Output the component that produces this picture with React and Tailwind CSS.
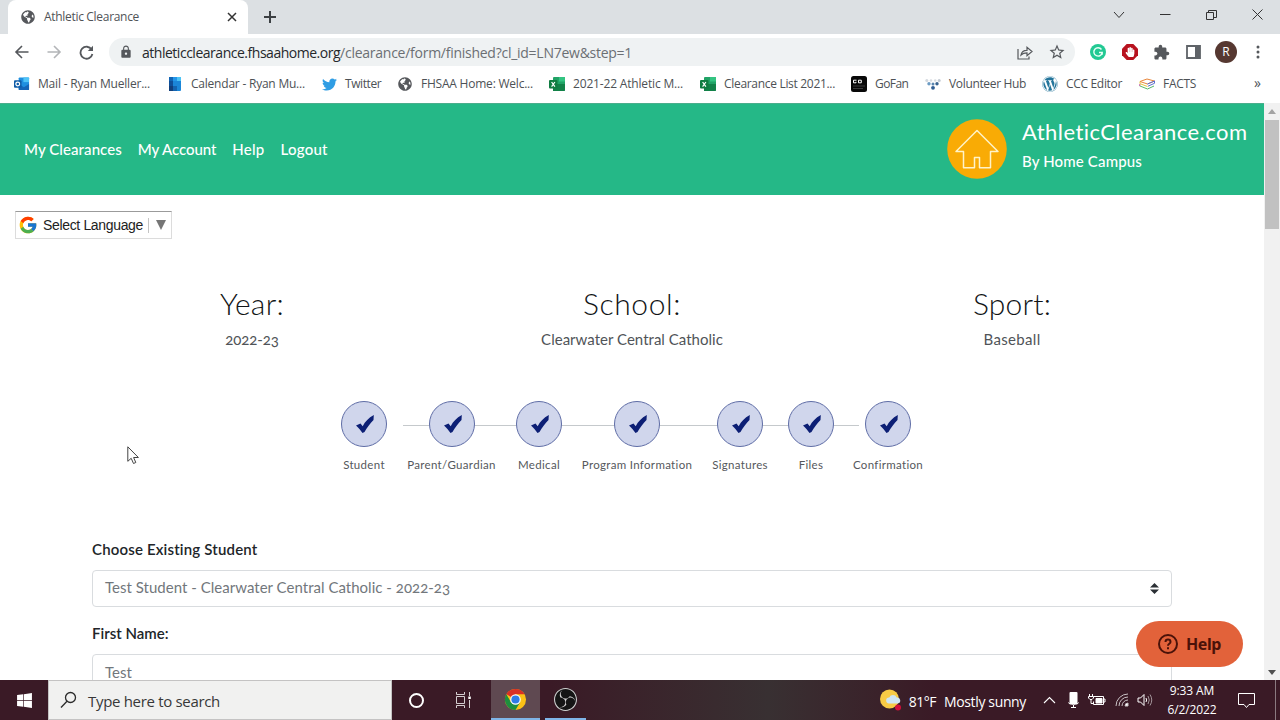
import { FaTwitter, FaWordpress, FaWindows, FaGlobeAmericas, FaHandPaper } from "react-icons/fa";
import { MdExtension, MdLock, MdStarBorder } from "react-icons/md";
import { FcGoogle } from "react-icons/fc";
import { SiObsstudio } from "react-icons/si";

const bookmarks = [
  { label: "Mail - Ryan Mueller...", icon: <OutlookIcon />, width: "w-[153px]", gap: "gap-[8px]", text: "tracking-[-0.19px]" },
  { label: "Calendar - Ryan Mu...", icon: <CalendarIcon />, width: "w-[154px]", gap: "gap-[8px]", text: "tracking-[-0.22px]" },
  { label: "Twitter", icon: <FaTwitter size={15} color="#2f9de4" />, width: "w-[76px]", gap: "gap-[8px]", text: "tracking-[-0.4px]" },
  { label: "FHSAA Home: Welc...", icon: <FaGlobeAmericas size={14} color="#56585c" />, width: "w-[152px]", gap: "gap-[8px]", text: "tracking-[-0.22px]" },
  { label: "2021-22 Athletic M...", icon: <ExcelIcon />, width: "w-[151px]", gap: "gap-[8px]", text: "tracking-[-0.17px]" },
  { label: "Clearance List 2021...", icon: <ExcelIcon />, width: "w-[151px]", gap: "gap-[8px]", text: "tracking-[-0.31px]" },
  { label: "GoFan", icon: <GoFanIcon />, width: "w-[74px]", gap: "gap-[8px]", text: "tracking-[-0.55px]" },
  { label: "Volunteer Hub", icon: <VolunteerIcon />, width: "w-[117px]", gap: "gap-[8px]", text: "tracking-[-0.34px]" },
  { label: "CCC Editor", icon: <FaWordpress size={16} color="#24759b" />, width: "w-[97px]", gap: "gap-[8px]", text: "tracking-[-0.32px]" },
  { label: "FACTS", icon: <FactsIcon />, width: "w-[90px]", gap: "gap-[8px]", text: "tracking-[-0.31px]" },
];

const navLinks = [
  { label: "My Clearances", text: "tracking-[0.08px]" },
  { label: "My Account", text: "tracking-[-0.08px]" },
  { label: "Help", text: "tracking-[0.25px]" },
  { label: "Logout", text: "tracking-[0.25px]" },
];

const summary = [
  { title: "Year:", value: "2022-23", titleText: "tracking-[0.3px]", valueText: "tracking-[-0.1px]" },
  { title: "School:", value: "Clearwater Central Catholic", titleText: "tracking-[0.6px]", valueText: "tracking-[0.02px]" },
  { title: "Sport:", value: "Baseball", titleText: "tracking-[0.2px]", valueText: "tracking-[0.33px]" },
];

const steps = [
  { label: "Student", width: "w-[62px]" },
  { label: "Parent/Guardian", width: "w-[113px]" },
  { label: "Medical", width: "w-[62px]" },
  { label: "Program Information", width: "w-[134px]" },
  { label: "Signatures", width: "w-[72px]" },
  { label: "Files", width: "w-[70px]" },
  { label: "Confirmation", width: "w-[84px]" },
];

function OutlookIcon() {
  return (
    <svg width="17" height="14" viewBox="0 0 17 14">
      <rect x="5" y="0" width="11" height="13" rx="1" fill="#1f8fe0" />
      <rect x="10" y="0" width="6" height="5" fill="#4fc3f7" />
      <path d="M5 7l5.5 3.5L16 7v6.5H5z" fill="#1565b8" />
      <rect x="0" y="3" width="8" height="8" rx="1" fill="#0f5ca8" />
      <circle cx="4" cy="7" r="2" fill="none" stroke="#fff" strokeWidth="1.3" />
    </svg>
  );
}

function CalendarIcon() {
  return (
    <svg width="14" height="14" viewBox="0 0 14 14">
      <rect x="1" width="12" height="14" rx="1" fill="#1b86d8" />
      <rect x="1" width="4" height="4" fill="#1265b5" />
      <rect x="5" width="4" height="4" fill="#2596e8" />
      <rect x="9" width="4" height="4" fill="#4cc3f5" />
      <rect x="1" y="4" width="4" height="5" fill="#0f4f98" />
      <rect x="1" y="9" width="4" height="5" fill="#123f7b" />
      <rect x="5" y="9" width="4" height="5" fill="#1464b0" />
    </svg>
  );
}

function ExcelIcon() {
  return (
    <svg width="16" height="14" viewBox="0 0 16 14">
      <rect x="4" width="12" height="14" rx="1" fill="#21a366" />
      <rect x="10" width="6" height="4.5" fill="#33c481" />
      <path d="M4 7h12v6a1 1 0 0 1-1 1H4z" fill="#128148" />
      <rect y="3" width="8.5" height="8.5" rx="1" fill="#107c41" />
      <path d="M2.6 5l3.3 4.6M5.9 5L2.6 9.6" stroke="#fff" strokeWidth="1.2" />
    </svg>
  );
}

function GoFanIcon() {
  return (
    <svg width="16" height="16" viewBox="0 0 16 16">
      <rect width="16" height="16" rx="2.5" fill="#080808" />
      <path d="M5.500 4.200H2.500v2.600H5V5.800M7.500 4.200h2.800v2.600H7.500z" fill="none" stroke="#fff" />
      <path d="M2 10h12M2 12.500h10" stroke="#3a3a3a" strokeWidth="1.2" />
    </svg>
  );
}

function VolunteerIcon() {
  return (
    <svg width="16" height="12" viewBox="0 0 16 12">
      <circle cx="1.800" cy="2.500" r="1.500" fill="#d3d8de" />
      <circle cx="6" cy="2.500" r="1.300" fill="#d9dde2" />
      <circle cx="10.200" cy="2.500" r="1.300" fill="#d9dde2" />
      <circle cx="14.200" cy="2.500" r="1.500" fill="#c3cad3" />
      <circle cx="4" cy="5.800" r="1.700" fill="#6d9cc4" />
      <circle cx="8" cy="6" r="1.500" fill="#5b86b0" />
      <circle cx="12" cy="5.800" r="1.700" fill="#3a638f" />
      <circle cx="8" cy="9.800" r="1.900" fill="#2f5d92" />
    </svg>
  );
}

function FactsIcon() {
  return (
    <svg width="16" height="12" viewBox="0 0 16 12" fill="none" strokeWidth="1">
      <path d="M1 3.500L8 1l7.500 2L8.500 6z" stroke="#e8853a" />
      <path d="M8.500 6l7-3v2.300L9 8.200" stroke="#5a6ed0" />
      <path d="M1 3.500v2.200L8.500 8.500" stroke="#e3c63c" />
      <path d="M.5 7.800L8.500 11 15 8" stroke="#56b868" />
      <path d="M.8 6v2" stroke="#c455a8" />
    </svg>
  );
}

function ChromeIcon() {
  return (
    <svg width="23" height="23" viewBox="0 0 24 24">
      <circle cx="12" cy="12" r="11" fill="#fbc116" />
      <path d="M12 12L2.470 6.500A11 11 0 0 1 21.530 6.500H12z" fill="#d93025" />
      <path d="M2.470 6.500A11 11 0 0 0 12 23l4.760-8.250L12 12 7.240 14.750z" fill="#1e8e3e" />
      <circle cx="12" cy="12" r="5.500" fill="#fff" />
      <circle cx="12" cy="12" r="4.300" fill="#2f7be6" />
    </svg>
  );
}

function TabStrip() {
  return (
    <div className="flex h-[34px] items-stretch bg-[#dce0e3] pl-2 text-[#3c4043]">
      <div className="flex w-[240px] items-center rounded-t-lg bg-white pl-[13px] pr-[11px]">
        <FaGlobeAmericas size={14} color="#56585c" />
        <span className="ml-[9px] flex-1 text-[12px] tracking-[-0.31px] text-[#505357]">Athletic Clearance</span>
        <svg width="10" height="10" viewBox="0 0 10 10" stroke="#333" strokeWidth="1.500"><path d="M1 1l8 8M9 1L1 9" /></svg>
      </div>
      <svg className="ml-[16px] mt-[11px]" width="12" height="12" viewBox="0 0 12 12" stroke="#3c4043" strokeWidth="2"><path d="M6 0v12M0 6h12" /></svg>
      <div className="ml-auto flex gap-[35px] pr-[17px] pt-[9px]">
        <svg width="12" height="12" viewBox="0 0 12 12" fill="none" stroke="#333"><path d="M1 3l5 5.500L11 3" /></svg>
        <svg width="11" height="12" viewBox="0 0 11 12" stroke="#333"><path d="M0 5.500h10.500" /></svg>
        <svg width="11" height="12" viewBox="0 0 11 12" fill="none" stroke="#333"><path d="M.5 3.500h7v7h-7zM2.500 3.500v-2h8v7h-3" /></svg>
        <svg width="11" height="12" viewBox="0 0 11 12" stroke="#333"><path d="M.5 .5l10 10M10.500 .5l-10 10" /></svg>
      </div>
    </div>
  );
}

function Toolbar() {
  return (
    <div className="flex h-[36px] items-center bg-white pl-[14px] text-[#55585c]">
      <svg width="16" height="16" viewBox="0 0 16 16" fill="none" stroke="currentColor" strokeWidth="1.600"><path d="M14.500 8H2.500M8 2L2 8l6 6" /></svg>
      <svg className="ml-[16px]" width="16" height="16" viewBox="0 0 16 16" fill="none" stroke="#b3b5b8" strokeWidth="1.600"><path d="M1.500 8h12M8 2l6 6-6 6" /></svg>
      <svg className="ml-[17px]" width="15" height="15" viewBox="0 0 15 15" fill="none" stroke="currentColor" strokeWidth="1.800">
        <path d="M12.600 4.500A6 6 0 1 0 13.400 9" />
        <path d="M14 .8V6H8.800z" fill="currentColor" stroke="none" />
      </svg>
      <div className="ml-[15px] flex h-[28px] w-[966px] items-center rounded-full bg-[#eff2f3] pl-[10px] pr-[9px]">
        <MdLock size={14} />
        <span className="ml-[9px] text-[14px] tracking-[-0.48px] text-[#25282b]">athleticclearance.fhsaahome.org</span>
        <span className="text-[14px] tracking-[-0.26px] text-[#6b6f73]">/clearance/form/finished?cl_id=LN7ew&amp;step=1</span>
        <svg className="ml-auto" width="16" height="15" viewBox="0 0 16 15" fill="none" stroke="currentColor" strokeWidth="1.200">
          <path d="M1 4v10h11v-2.500" />
          <path d="M4 10c.5-3 2.500-4.700 6-4.700V2.200L15 6.500l-5 4.200V7.900C7 7.900 5.500 8.500 4 10z" />
        </svg>
        <MdStarBorder className="ml-[15px]" size={18} />
      </div>
      <div className="ml-[15px] flex items-center">
        <svg width="16" height="16" viewBox="0 0 16 16" fill="none">
          <circle cx="8" cy="8" r="8" fill="#22c993" />
          <path d="M11.500 5.500A4.200 4.200 0 1 0 12.200 8.500H9M12.200 8.500v2.200" stroke="#e8fff6" strokeWidth="1.400" />
        </svg>
        <span className="relative ml-[16px] flex size-[16px] items-center justify-center">
          <svg className="absolute" width="16" height="16" viewBox="0 0 16 16"><path d="M4.700 0h6.600L16 4.700v6.600L11.300 16H4.700L0 11.300V4.700z" fill="#b8121f" /></svg>
          <FaHandPaper className="relative" size={10} color="#fff" />
        </span>
        <MdExtension className="ml-[15px]" size={17} />
        <svg className="ml-[16px]" width="15" height="14" viewBox="0 0 15 14"><path d="M1 1h13v12H1z" fill="none" stroke="#5f6368" strokeWidth="1.800" /><path d="M9 1h5v12H9z" fill="#5f6368" /></svg>
        <span className="ml-[14px] flex size-[22px] items-center justify-center rounded-full bg-[#563831] text-[12px] text-white">R</span>
        <svg className="ml-[19px]" width="4" height="14" viewBox="0 0 4 14" fill="#55585c"><circle cx="2" cy="2" r="1.500" /><circle cx="2" cy="7" r="1.500" /><circle cx="2" cy="12" r="1.500" /></svg>
      </div>
    </div>
  );
}

function BookmarksBar() {
  return (
    <div className="flex h-[33px] items-center bg-white pb-[5px] pl-[14px] text-[12px] text-[#4d5155]">
      {bookmarks.map((b) => (
        <div key={b.label} className={`flex shrink-0 items-center whitespace-nowrap ${b.width} ${b.gap}`}>
          <span className="flex w-[16px] justify-center">{b.icon}</span>
          <span className={b.text}>{b.label}</span>
        </div>
      ))}
      <span className="ml-auto pb-[3px] pr-[19px] text-[14px]">»</span>
    </div>
  );
}

function SiteHeader() {
  return (
    <header className="flex h-[92px] items-center justify-between border-t border-[#4aae8c] bg-[#25b887] pl-6 pr-[16px] text-white">
      <nav className="flex gap-4 pb-px text-[15px] font-medium">
        {navLinks.map((n) => (
          <a key={n.label} className={n.text}>{n.label}</a>
        ))}
      </nav>
      <div className="flex items-center pb-px">
        <svg width="60" height="60" viewBox="0 0 60 60">
          <circle cx="30" cy="30" r="29.800" fill="#f9ab05" />
          <path d="M30 11.500L9 32.500h7.500v16.300h11V38.500h5v10.300h11V32.500H51z" fill="none" stroke="#fff3c9" strokeWidth="1.500" strokeLinejoin="round" />
        </svg>
        <div className="ml-[15px] h-[60px] w-[226px] whitespace-nowrap">
          <div className="mt-[-1px] text-[22px] leading-[28px] tracking-[0.45px]">AthleticClearance.com</div>
          <div className="mt-[5px] text-[15px] font-medium leading-[20px] tracking-[0.15px]">By Home Campus</div>
        </div>
      </div>
    </header>
  );
}

function StepTracker() {
  return (
    <div className="relative ml-[333px] mt-[51px] flex">
      <div className="absolute left-[70px] top-[24px] h-px w-[456px] bg-[#c5c9cc]" />
      {steps.map((s) => (
        <div key={s.label} className={`relative flex shrink-0 flex-col items-center ${s.width}`}>
          <div className="flex size-[46px] items-center justify-center rounded-full border-[1.5px] border-[#5f6da6] bg-[#d0d6ec]">
            <svg className="ml-[2px]" width="20" height="20" viewBox="0 0 20 20" fill="#0c1f75">
              <path d="M1 11.500l4.500-2 2.200 2.700C10.200 7.500 13.500 3.800 18.800 1l-.3 5c-3.500 3.500-6.500 7.500-9 12L7.500 19C5.500 16.500 3.500 13.500 1 11.500z" />
            </svg>
          </div>
          <span className="mt-[10px] whitespace-nowrap text-[11.5px] leading-[16px] tracking-[0.32px] text-[#55585c]">{s.label}</span>
        </div>
      ))}
    </div>
  );
}

function StudentForm() {
  return (
    <div className="mx-[92px] mt-[66px] text-[15px] text-[#72777c]">
      <div className="h-[31px] leading-[20px] font-semibold tracking-[0.17px] text-[#212529]">Choose Existing Student</div>
      <div className="flex h-[37px] items-center justify-between rounded border border-[#d9dcdf] pl-3 pr-[12px]">
        <span className="pb-[2px] tracking-[0.02px] oldstyle-nums">Test Student - Clearwater Central Catholic - 2022-23</span>
        <svg width="9" height="11" viewBox="0 0 9 11" fill="#2b3035"><path d="M4.500 0L9 4.500H0zM0 6.500h9L4.500 11z" /></svg>
      </div>
      <div className="mt-[16px] h-[31px] leading-[20px] font-semibold text-[#212529]">First Name:</div>
      <div className="flex h-[37px] items-center rounded border border-[#d9dcdf] px-3">Test</div>
    </div>
  );
}

function Scrollbar() {
  return (
    <div className="flex w-[16px] flex-col items-center bg-[#f1f1f1] pb-[5px] pt-[6px]">
      <svg width="8" height="5" viewBox="0 0 8 5"><path d="M4 0l4 5H0z" fill="#a3a3a3" /></svg>
      <div className="mt-[6px] h-[109px] w-[14px] bg-[#c1c1c1]" />
      <svg className="mt-auto" width="8" height="5" viewBox="0 0 8 5"><path d="M4 5L0 0h8z" fill="#505050" /></svg>
    </div>
  );
}

function Taskbar() {
  return (
    <div className="flex h-[40px] shrink-0 bg-linear-to-r from-[#3a1a26] from-[43%] via-[#383032] via-[60%] to-[#3a1a26] to-[73%] text-white">
      <div className="flex w-[48px] items-center justify-center"><FaWindows size={17} /></div>
      <div className="flex w-[344px] items-center border border-[#c4c3c3] bg-[#f1f1f0] pl-[11px]">
        <svg width="18" height="18" viewBox="0 0 18 18" fill="none" stroke="#2b2b2b" strokeWidth="1.300"><circle cx="10.500" cy="6.500" r="5" /><path d="M7 10.200L1 16.500" /></svg>
        <span className="ml-[10px] pt-[2px] text-[15px] tracking-[-0.32px] text-[#383838]">Type here to search</span>
      </div>
      <div className="flex w-[48px] items-center justify-center"><div className="size-[15px] rounded-full border-2 border-white" /></div>
      <div className="flex w-[51px] items-center justify-center pr-[4px]">
        <svg width="17" height="16" viewBox="0 0 17 16" fill="none" stroke="#d5cfd1"><path d="M1.500 4.500h8v7h-8zM1.500 0v2.500h8V0M1.500 16v-2.500h8V16M14.500 0v4M14.500 8v8" /><path d="M13.300 4.500h2.500v2.500h-2.500z" fill="#fff" stroke="none" /></svg>
      </div>
      <div className="flex w-[49px] items-center justify-center border-b-2 border-[#7fb5e8] bg-[#5f4951] pt-px"><ChromeIcon /></div>
      <div className="ml-[5px] flex w-[41px] items-center justify-center border-b-2 border-[#7fb5e8]">
        <div className="flex size-[23px] items-center justify-center rounded-full bg-[#151515]"><SiObsstudio size={23} color="#d2d0d1" /></div>
      </div>
      <div className="ml-auto flex items-center text-[14px]">
        <svg width="23" height="22" viewBox="0 0 23 22">
          <circle cx="10.500" cy="10" r="9.500" fill="#f8cb45" />
          <path d="M10 14.500a3 3 0 0 1 .3-6 4 4 0 0 1 7.400 0 3 3 0 0 1 1 6z" fill="#cfe6f3" />
          <circle cx="19" cy="18.500" r="3" fill="#d0103a" />
        </svg>
        <span className="ml-[7px] pt-[2px] tracking-[-0.5px]">81°F</span>
        <span className="ml-[8px] pt-[2px] tracking-[-0.36px]">Mostly sunny</span>
        <svg className="ml-[17px]" width="13" height="8" viewBox="0 0 13 8" fill="none" stroke="#fff" strokeWidth="1.100"><path d="M1 7l5.500-5.500L12 7" /></svg>
        <svg className="ml-[12px]" width="11" height="16" viewBox="0 0 11 16"><rect x="1.500" width="8" height="12" rx="1" fill="#fff" /><path d="M.5 10.500c0 2.500 10 2.500 10 0M5.500 13v2.500M3 15.500h5" fill="none" stroke="#fff" /></svg>
        <svg className="ml-[9px]" width="18" height="12" viewBox="0 0 18 12" fill="none" stroke="#fff"><path d="M5.500 2.500h10v8h-10v-3M15.500 5h1.500v3h-1.500" /><path d="M8 4.500h6v4.500H8z" fill="#fff" /><path d="M1.500 0v2M4.500 0v2M.5 2.500h5v1.500L4 5.500H2L.5 4zM3 5.500v4h2.500" /></svg>
        <svg className="ml-[9px]" width="14" height="14" viewBox="0 0 14 14" fill="none" stroke="#c9c1c4"><path d="M1 13A12 12 0 0 1 13 1M4 13A9 9 0 0 1 13 4M7 13A6 6 0 0 1 13 7" /><path d="M10 13a3 3 0 0 1 3-3v3z" fill="#fff" /></svg>
        <svg className="ml-[8px]" width="16" height="14" viewBox="0 0 16 14" fill="none" stroke="#fff"><path d="M1 5h2.500L7 1.500v11L3.500 9H1zM9 5q1.200 2 0 4" /><path d="M11 3q2.500 4 0 8M13 1.500q3.500 5.500 0 11" stroke="#a3959a" /></svg>
        <div className="ml-[14px] w-[50px] whitespace-nowrap text-center text-[12px] leading-[19px] tracking-[-0.11px]">
          <div>9:33 AM</div>
          <div>6/2/2022</div>
        </div>
        <svg className="ml-[21px]" width="17" height="17" viewBox="0 0 17 17" fill="none" stroke="#fff"><path d="M.5 1.500h16v11h-5.500L8.500 15.500 6 12.500H.5z" /></svg>
        <div className="ml-[20px] mr-[4px] h-[40px] w-px bg-[#8a7a80]" />
      </div>
    </div>
  );
}

export default function App() {
  return (
    <div className="relative flex h-[720px] w-[1280px] flex-col overflow-hidden bg-white font-['Open_Sans',sans-serif]">
      <TabStrip />
      <Toolbar />
      <BookmarksBar />
      <div className="flex h-[577px] overflow-hidden">
        <main className="w-[1264px] overflow-hidden font-['Lato',sans-serif]">
          <SiteHeader />
          <div className="ml-[15px] mt-[16px] flex h-[28px] w-[157px] items-center border border-[#dcdcdc] border-t-[#9b9b9b] pl-[2px] font-['Liberation_Sans',sans-serif] text-[14px] text-[#222]">
            <FcGoogle size={20} />
            <span className="ml-[5px] tracking-[-0.34px]">Select Language</span>
            <span className="ml-[5px] h-[15px] w-px bg-[#c4c4c4]" />
            <svg className="ml-[7px]" width="10" height="10" viewBox="0 0 10 10"><path d="M0 0h10L5 10z" fill="#767676" /></svg>
          </div>
          <div className="mx-[62px] mt-[45px] grid grid-cols-3 text-center">
            {summary.map((s) => (
              <div key={s.title} className="h-[66px]">
                <h2 className={`text-[30px] font-light leading-[38px] text-[#111416] ${s.titleText}`}>{s.title}</h2>
                <p className={`mt-[7px] text-[15px] leading-[20px] text-[#505458] oldstyle-nums ${s.valueText}`}>{s.value}</p>
              </div>
            ))}
          </div>
          <StepTracker />
          <StudentForm />
        </main>
        <Scrollbar />
      </div>
      <Taskbar />

      <button className="absolute left-[1136px] top-[621px] flex h-[46px] w-[107px] items-center rounded-full bg-[#e2623a] pl-[22px] font-['Noto_Sans',sans-serif] text-[16px] font-bold text-[#4a1209]">
        <svg width="20" height="20" viewBox="0 0 20 20" fill="none" stroke="#4a1209" strokeWidth="2">
          <circle cx="10" cy="10" r="9" />
          <path d="M7.500 8c0-3.200 5-3.200 5 0 0 1.800-2.500 1.700-2.500 3.700M10 13.300v1.900" />
        </svg>
        <span className="ml-[8px] tracking-[-0.4px]">Help</span>
      </button>
      <svg className="absolute left-[127px] top-[446px]" width="13" height="19" viewBox="0 0 13 19" fill="#fff" stroke="#444"><path d="M.8 .8v14.500l3.400-3 2.300 5.200 2.300-1-2.200-5h4.800z" /></svg>
    </div>
  );
}
